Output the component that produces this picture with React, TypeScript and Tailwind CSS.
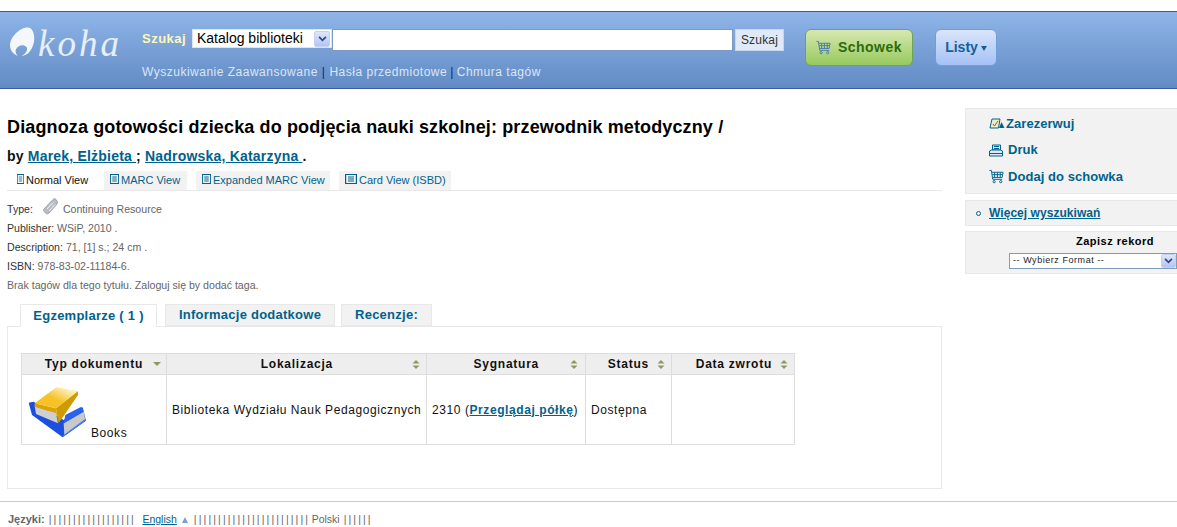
const font = "font-['Liberation_Sans',Arial,sans-serif]"

function CartIcon({ className }: { className?: string }) {
  return (
    <svg viewBox="0 0 16 16" className={className} fill="none" stroke="currentColor" strokeWidth="1">
      <path d="M0.5 1.5h2l1.5 9.5h10" />
      <path d="M3 3.5h12l-1 5.5H4" />
      <path d="M6 3.5v5.5M9 3.5v5.5M12 3.5v5.5M3.5 6h11" />
      <circle cx="5.5" cy="13.5" r="1.2" />
      <circle cx="12.5" cy="13.5" r="1.2" />
    </svg>
  )
}

function SelectArrow({ className }: { className?: string }) {
  return (
    <span className={`flex items-center justify-center rounded-[2px] bg-gradient-to-b from-[#dfe6fb] to-[#b4c5f2] border border-[#c3d1f5] ${className}`}>
      <svg viewBox="0 0 10 7" className="w-[9px] h-[6px]" fill="none" stroke="#2c4a86" strokeWidth="2">
        <path d="M1 1l4 4 4-4" />
      </svg>
    </span>
  )
}

function SortArrows() {
  return (
    <svg viewBox="0 0 8 9" className="w-[8px] h-[9px] shrink-0">
      <path d="M4 0l3.500 3.500h-7z" fill="#8f9a5a" />
      <path d="M4 9L.5 5.500h7z" fill="#8f9a5a" />
    </svg>
  )
}

function BooksIcon() {
  return (
    <svg viewBox="18 18 180 156" className="w-[60px] h-[52px] shrink-0 mb-[2px]">
      <defs>
        <linearGradient id="bookTop" x1="0" y1="1" x2="1" y2="0">
          <stop offset="0.45" stopColor="#f6c226" />
          <stop offset="0.85" stopColor="#fff2c0" />
          <stop offset="1" stopColor="#f8d560" />
        </linearGradient>
      </defs>
      <polygon points="20,68 35,65 125,120 182,82 192,122 122,172 30,105" fill="#1a4fe0" />
      <polygon points="125,130 185,95 190,120 127,165" fill="#c9c9cc" />
      <polygon points="122,172 192,120 190,116 125,165" fill="#4a7cf6" />
      <polygon points="130,105 178,80 185,94 125,130" fill="#2a62ee" />
      <polygon points="38,78 102,100 108,130 42,102" fill="#cfcfd2" />
      <polygon points="38,70 102,85 110,130 102,100 38,80" fill="#d9a406" />
      <polygon points="168,33 102,85 110,130 168,45" fill="#cf9a04" />
      <polygon points="38,70 103,22 168,33 102,85" fill="url(#bookTop)" />
    </svg>
  )
}

function ViewIcon({ w }: { w: string }) {
  return (
    <svg viewBox="0 0 10 10" className={`${w} h-[10px] shrink-0 mt-[-3px]`} fill="none" stroke="#00628c" strokeWidth="1" preserveAspectRatio="none">
      <rect x="0.5" y="0.5" width="9" height="9" />
      <path d="M2.500 3h5M2.500 5h5M2.500 7h5" />
    </svg>
  )
}

const columns = ['Lokalizacja', 'Sygnatura', 'Status', 'Data zwrotu']
const cell = 'border border-[#dddddd] px-[5px]'

function Bars({ count, className }: { count: number; className?: string }) {
  return <span className={`tracking-[-0.4px] ${className ?? ''}`}>{Array(count).fill('|').join(' ')}</span>
}

export default function App() {
  return (
    <div className={`${font} w-[1177px] h-[527px] overflow-hidden bg-white text-[#333] flex flex-col`}>
      {/* header */}
      <header className="mt-[11px] h-[78px] shrink-0 border-y border-[#3a5aa5] bg-gradient-to-b from-[#8fb5e8] to-[#628bc4] flex">
        <div className="w-[142px] shrink-0 flex items-start pl-[10px] pt-[15px]">
          <svg viewBox="0 0 26 31" className="w-[25px] h-[30px] shrink-0">
            <path d="M19 .5C24 1 26 9 25 15c-1 7-6 15-13 15 5-2 7-7 5-9.500-3-3-9-2-11 3-.5 1.500 0 4 2 6.500C3 28 0 24 0 19 0 11 10 0 19 .5z" fill="#f4f7fc" />
          </svg>
          <span className="font-['Liberation_Serif',serif] italic text-[37px] leading-[36px] tracking-[3px] text-[#e8eff9] ml-[3px] mt-[-1px]">koha</span>
        </div>
        <div className="flex flex-col pt-[17px]">
          <div className="flex items-start h-[33px]">
            <span className="text-[13px] font-bold tracking-[0.5px] text-[#fdf8b8] w-[50px] h-[19px] leading-[19px]">Szukaj</span>
            <div className="w-[140px] h-[19px] bg-white flex items-center pl-[4px] pr-[1px] text-[14px] text-black justify-between border border-[#dce4f2]">
              <span>Katalog biblioteki</span>
              <SelectArrow className="w-[16px] h-[16px]" />
            </div>
            <div className="w-[401px] h-[22px] bg-white border border-[#7e9bbf]" />
            <div className="ml-[2px] w-[49px] h-[22px] bg-[#dfe9f7] border border-[#c7d6ea] flex items-center justify-center text-[12px] tracking-[0.2px] text-[#333]">Szukaj</div>
            <div className="ml-[21px] w-[108px] h-[37px] rounded-[6px] border border-[#6fa35a] bg-gradient-to-b from-[#d6e8b0] to-[#97c95c] flex items-center justify-center gap-[7px] text-[14px] font-bold tracking-[0.5px] text-[#2f6b0a]">
              <CartIcon className="w-[15px] h-[15px] text-[#4a78a8]" />
              Schowek
            </div>
            <div className="ml-[22px] w-[62px] h-[37px] rounded-[6px] border border-[#6f9fd8] bg-gradient-to-b from-[#d9e5fb] to-[#a5c1f5] flex items-center justify-center gap-[3px] text-[14px] font-bold text-[#14609a]">
              Listy
              <svg viewBox="0 0 6 6" className="w-[6px] h-[6px]"><path d="M0 1h6L3 6z" fill="#14609a" /></svg>
            </div>
          </div>
          <div className="h-[20px] flex items-center text-[12px] tracking-[0.5px] text-[#dbe5f5]">
            Wyszukiwanie Zaawansowane
            <span className="mx-[4px] text-[#0b1f8f]">|</span>
            Hasła przedmiotowe
            <span className="mx-[3px] text-[#0b1f8f]">|</span>
            Chmura tagów
          </div>
        </div>
      </header>

      <div className="flex flex-1 min-h-0">
        {/* main column */}
        <main className="w-[942px] shrink-0 pl-[7px] flex flex-col">
          <h1 className="mt-[27px] h-[22px] text-[18px] leading-[22px] font-bold text-black tracking-[0.13px] whitespace-nowrap">
            Diagnoza gotowości dziecka do podjęcia nauki szkolnej: przewodnik metodyczny /
          </h1>
          <p className="mt-[10px] h-[17px] text-[14px] leading-[17px] font-bold text-[#111] tracking-[0.2px] whitespace-nowrap">
            by <a className="text-[#00628c] underline">Marek, Elżbieta </a>; <a className="text-[#00628c] underline">Nadrowska, Katarzyna </a>.
          </p>
          <div className="mt-[6px] h-[20px] border-b border-[#e8e8e8] flex items-start text-[11px] text-[#00628c] whitespace-nowrap">
            <div className="h-[19px] w-[97px] pl-[10px] flex items-center gap-[2px] text-[#111]"><ViewIcon w="w-[7px]" />Normal View</div>
            <div className="h-[19px] w-[83px] pl-[6px] bg-[#f2f2f2] flex items-center gap-[2px]"><ViewIcon w="w-[9px]" />MARC View</div>
            <div className="h-[19px] w-[134px] ml-[9px] pl-[6px] bg-[#f2f2f2] flex items-center gap-[2px]"><ViewIcon w="w-[9px]" />Expanded MARC View</div>
            <div className="h-[19px] w-[112px] ml-[9px] pl-[6px] bg-[#f2f2f2] flex items-center gap-[2px]"><ViewIcon w="w-[12px]" />Card View (ISBD)</div>
          </div>
          <div className="mt-[9px] text-[10.6px] leading-[19px] text-[#666] whitespace-nowrap">
            <div className="flex items-center h-[19px]">
              <span className="text-[#333]">Type:</span>
              <svg viewBox="0 0 15 17" className="w-[15px] h-[17px] ml-[10px] mr-[5px] mt-[-6px]">
                <path d="M1 11L10 1.500c1-1 2-1 3 0l1 1.500c.8 1 .6 2 0 3L6 15c-1 1-2 1-3 .2L1 13.500c-.6-.8-.6-1.800 0-2.500z" fill="#b9bec4" stroke="#9ca2a8" />
                <path d="M4 11l6-6.500M6 13l6-6.500" stroke="#eef1f4" />
              </svg>
              Continuing Resource
            </div>
            <div><span className="text-[#333]">Publisher:</span> WSiP, 2010 .</div>
            <div><span className="text-[#333]">Description:</span> 71, [1] s.; 24 cm .</div>
            <div><span className="text-[#333]">ISBN:</span> 978-83-02-11184-6.</div>
            <div>Brak tagów dla tego tytułu. Zaloguj się by dodać taga.</div>
          </div>

          {/* tabs */}
          <div className="mt-[9px] h-[23px] flex pl-[13px] text-[13px] font-bold tracking-[0.25px] text-[#00628c] whitespace-nowrap relative z-10">
            <div className="w-[137px] h-[23px] bg-white border border-[#e8e8e8] border-b-white flex items-center justify-center">Egzemplarze ( 1 )</div>
            <div className="ml-[8px] w-[170px] h-[22px] bg-[#f2f2f2] border border-[#e8e8e8] flex items-center justify-center">Informacje dodatkowe</div>
            <div className="ml-[6px] w-[91px] h-[22px] bg-[#f2f2f2] border border-[#e8e8e8] flex items-center justify-center">Recenzje:</div>
          </div>
          <div className="mt-[-1px] w-[935px] h-[163px] border border-[#e8e8e8] pl-[13px] pt-[26px]">
            <table className="w-[773px] border-collapse table-fixed text-[12px] text-[#111]">
              <colgroup>
                <col className="w-[145px]" />
                <col className="w-[260px]" />
                <col className="w-[159px]" />
                <col className="w-[86px]" />
                <col className="w-[123px]" />
              </colgroup>
              <thead>
                <tr className="h-[21px] bg-[#eeeeee] font-bold tracking-[0.75px]">
                  <th className={cell}>
                    <div className="flex items-center justify-end gap-[10px]">
                      Typ dokumentu
                      <svg viewBox="0 0 8 4" className="w-[8px] h-[4px] shrink-0"><path d="M0 0h8L4 4z" fill="#8f9a5a" /></svg>
                    </div>
                  </th>
                  {columns.map(c => (
                    <th key={c} className={cell}>
                      <div className={`flex items-center justify-end gap-[8px] ${c === 'Sygnatura' ? 'pr-[2px]' : 'pr-[1px]'}`}>
                        <span className={c === 'Lokalizacja' ? 'mr-[71px]' : c === 'Sygnatura' ? 'mr-[23px]' : ''}>{c}</span>
                        <SortArrows />
                      </div>
                    </th>
                  ))}
                </tr>
              </thead>
              <tbody>
                <tr className="h-[70px] tracking-[0.58px]">
                  <td className={`${cell} align-bottom`}>
                    <div className="flex items-end pb-[4px] ml-[1px]">
                      <BooksIcon />
                      <span className="ml-[3px] leading-[14px]">Books</span>
                    </div>
                  </td>
                  <td className={`${cell} whitespace-nowrap`}>Biblioteka Wydziału Nauk Pedagogicznych</td>
                  <td className={`${cell} whitespace-nowrap`}>2310 (<a className="font-bold text-[#00628c] underline">Przeglądaj półkę</a>)</td>
                  <td className={cell}>Dostępna</td>
                  <td className={cell}></td>
                </tr>
              </tbody>
            </table>
          </div>
        </main>

        {/* sidebar */}
        <aside className="ml-[23px] w-[212px] shrink-0 pt-[19px] flex flex-col text-[13px] font-bold tracking-[0.05px] text-[#00628c]">
          <div className="h-[86px] bg-[#f2f2f2] border border-[#e8e8e8] border-r-0 pl-[23px] pt-[2px] flex flex-col">
            <div className="h-[26px] flex items-center">
              <svg viewBox="0 0 16 11" className="w-[16px] h-[11px] mr-[1px] shrink-0 mt-[-2px]">
                <path d="M3 1h8l-1.500 9H1z" fill="#f0eccb" stroke="#00628c" />
                <path d="M4 6l1.500 2 3.500-5" stroke="#5a7a20" fill="none" />
                <path d="M10 10l2.500-6 3 6z" fill="#00628c" />
              </svg>
              Zarezerwuj
            </div>
            <div className="h-[26px] flex items-center">
              <svg viewBox="0 0 14 13" className="w-[14px] h-[13px] mr-[5px] shrink-0" fill="#dfe8f0" stroke="#00628c">
                <path d="M3.500 6V1h8v5z" />
                <path d="M5 2.500h5M5 4.500h5" />
                <path d="M.5 7 2.500 6h9l2 1v5H.5z" />
                <path d="M1 9.500h12" />
              </svg>
              Druk
            </div>
            <div className="h-[27px] flex items-center">
              <CartIcon className="w-[15px] h-[15px] mr-[4px] shrink-0 text-[#00628c]" />
              Dodaj do schowka
            </div>
          </div>
          <div className="mt-[6px] h-[26px] bg-[#f2f2f2] border border-[#e8e8e8] border-r-0 pl-[10px] flex items-center">
            <span className="w-[5px] h-[5px] rounded-full border border-[#00628c] mr-[8px]" />
            <a className="text-[12px] underline">Więcej wyszukiwań</a>
          </div>
          <div className="mt-[5px] h-[43px] bg-[#f2f2f2] border border-[#e8e8e8] border-r-0 flex flex-col pl-[43px]">
            <div className="pl-[67px] pt-[2px] h-[21px] text-[11px] leading-[15px] tracking-[0.5px] text-black whitespace-nowrap">Zapisz rekord</div>
            <div className="w-[168px] h-[16px] bg-white border border-[#7f9db9] flex items-center justify-between pl-[3px] text-[9px] font-normal tracking-[0.55px] text-[#222]">
              -- Wybierz Format --
              <SelectArrow className="w-[15px] h-[14px]" />
            </div>
          </div>
        </aside>
      </div>

      {/* footer */}
      <footer className="h-[26px] shrink-0 border-t border-[#cccccc] flex items-center pl-[8px] pt-[10px] text-[10.5px] text-[#666] whitespace-pre">
        <span className="font-bold text-[11px]">Języki:</span>
        <Bars count={18} className="ml-[4px]" />
        <a className="ml-[9px] text-[#00628c] underline">English</a>
        <svg viewBox="0 0 6 6" className="w-[6px] h-[6px] ml-[5px]"><path d="M3 0l3 6H0z" fill="#7d9fd6" /></svg>
        <Bars count={24} className="ml-[6px]" />
        <span className="ml-[4px]">Polski</span>
        <Bars count={6} className="ml-[4px]" />
      </footer>
    </div>
  )
}
